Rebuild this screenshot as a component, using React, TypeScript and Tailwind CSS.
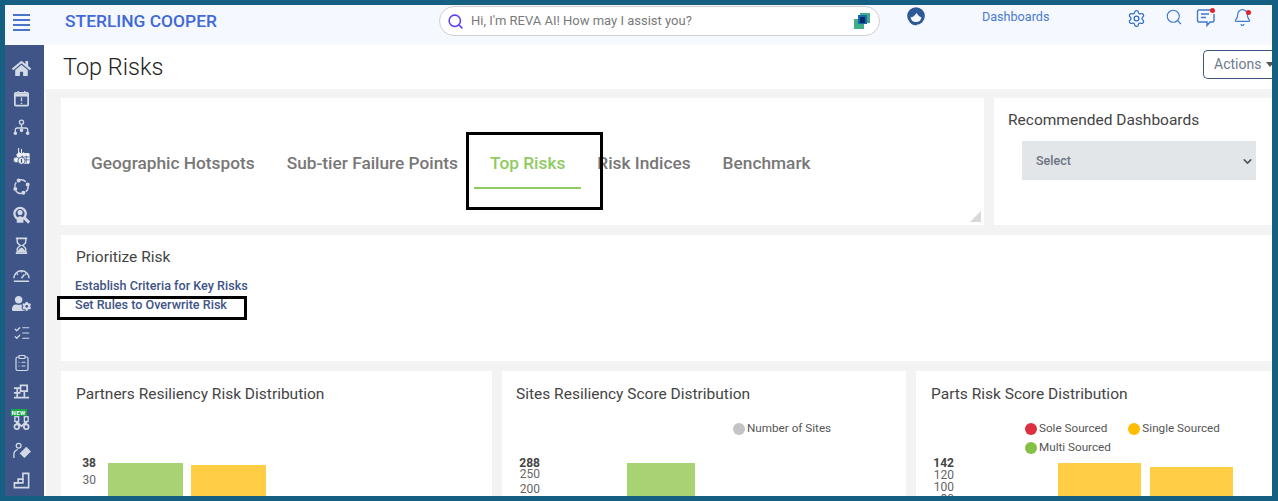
import React from 'react';
import { Settings, Search, Bell, ChevronDown, ListChecks, ClipboardList } from 'lucide-react';
import { FaHome, FaUserCog } from 'react-icons/fa';

const C = '#d3d9e5';

const Svg = ({ children }: { children: React.ReactNode }) => (
  <svg width="19" height="19" viewBox="0 0 20 20" fill="none" stroke={C} strokeWidth="1.4" aria-hidden>
    {children}
  </svg>
);

const SIDE_ICONS = [
  <FaHome key="home" size={19} color={C} />,
  <Svg key="cal">
    <rect x="3" y="4" width="14" height="13.5" rx="1" strokeWidth="1.8" />
    <path d="M3 6.500h14" strokeWidth="3" />
    <path d="M6.500 2v2M13.500 2v2M10 9v4M10 14.500v1.200" />
  </Svg>,
  <Svg key="org">
    <circle cx="10" cy="4.500" r="2.200" />
    <path d="M10 7v3M3.500 15v-2.500q0-2 2-2h9q2 0 2 2V15" />
    <circle cx="3.500" cy="16" r="1.200" fill={C} />
    <circle cx="10" cy="13" r="1.200" fill={C} />
    <circle cx="16.500" cy="16" r="1.200" fill={C} />
  </Svg>,
  <Svg key="factory">
    <path d="M7 1v6M10 2v5M5 8l3-2 2 2 2-2 1.500 1H18v10H9z" fill="#eef1f6" stroke="#fff" strokeWidth="1" />
    <path d="M11 9v8M15 9v8M9 10.500h9M9 13.500h9" stroke="#3f5487" strokeWidth="0.8" />
    <circle cx="4.500" cy="13.500" r="3" fill="#eef1f6" stroke="#3f5487" strokeWidth="0.8" />
    <circle cx="10" cy="14.500" r="3.700" fill="#eef1f6" stroke="#3f5487" strokeWidth="0.8" />
    <path d="M10 12.500v4" stroke="#3f5487" />
  </Svg>,
  <Svg key="cycle">
    <path d="M8 3.200a7 7 0 0 1 6.500 1.800M17 9.500a7 7 0 0 1-2.500 6M10.500 17.200a7 7 0 0 1-6.500-2.500M3 11a7 7 0 0 1 1.500-5.500" strokeWidth="1.500" />
    <circle cx="7" cy="3.700" r="1.400" fill={C} />
    <circle cx="16.500" cy="8" r="1.400" fill={C} />
    <circle cx="12" cy="16.500" r="1.400" fill={C} />
    <circle cx="3.500" cy="12.500" r="1.400" fill={C} />
  </Svg>,
  <Svg key="person">
    <circle cx="8.500" cy="8" r="6" strokeWidth="2.400" />
    <circle cx="8.500" cy="6.800" r="2" fill={C} />
    <path d="M5 12.500q3.500-3.500 7 0v5H5z" fill={C} stroke="none" />
    <path d="M13 12.500l5 5" strokeWidth="3" />
  </Svg>,
  <Svg key="hour">
    <path d="M4 2.500h12M4 18h12" strokeWidth="2" />
    <path d="M5.500 3v3q0 2 3.500 4-3.500 2-3.500 4v4M14.500 3v3q0 2-3.500 4 3.500 2 3.500 4v4" strokeWidth="1.500" />
    <path d="M6 17q0-3 4-5 4 2 4 5z" fill={C} stroke="none" />
  </Svg>,
  <Svg key="gauge">
    <path d="M2 14a8 8 0 0 1 16 0" strokeWidth="1.600" />
    <path d="M10 6v2M5 9l1.200 1.200M15 9l-1.200 1.200M10 14l3-4M2 17h16" strokeWidth="1.600" />
  </Svg>,
  <FaUserCog key="user" size={19} color={C} />,
  <ListChecks key="list" size={18} color={C} strokeWidth={1.6} />,
  <ClipboardList key="clip" size={18} color={C} strokeWidth={1.6} />,
  <Svg key="flow">
    <path d="M2 6.500h7M9 3.500h7v6h-7zM2 11.500h7M5.500 6.500v10M13 9.500v7M2 16.500h16" strokeWidth="1.800" />
  </Svg>,
  <div key="new" className="relative flex h-[20px] w-[20px] items-end justify-center">
    <Svg>
      <rect x="3" y="5" width="4" height="5" />
      <rect x="13" y="5" width="4" height="5" />
      <circle cx="5" cy="15.500" r="2.500" strokeWidth="1.800" />
      <circle cx="15" cy="15.500" r="2.500" strokeWidth="1.800" />
      <path d="M5 10l5 5 5-5M5 10v3M15 10v3" strokeWidth="1.800" />
    </Svg>
    <span className="absolute left-[-1px] top-[-2px] bg-[#19a94b] px-[1px] text-[6px] font-bold leading-[7px] tracking-[0.5px] text-white">NEW</span>
  </div>,
  <Svg key="pen">
    <circle cx="7" cy="5" r="2.500" />
    <path d="M2 18v-4q0-4 4-5" />
    <path d="M9 13l6-6 4 4-6 6z" fill={C} />
  </Svg>,
  <Svg key="steps">
    <path d="M2.500 17.500h15v-15h-6v6h-5v4h-4z" strokeWidth="1.700" />
    <path d="M2.500 12.500h9v-4" strokeWidth="1.700" />
  </Svg>,
];

const TABS = ['Geographic Hotspots', 'Sub-tier Failure Points', 'Top Risks', 'Risk Indices', 'Benchmark'];

const Legend = ({ color, label }: { color: string; label: string }) => (
  <span className="flex items-center gap-[2px]">
    <span className="h-[12px] w-[12px] rounded-full" style={{ backgroundColor: color }} />
    {label}
  </span>
);

const AxisLabel = ({ x, y, bold, children }: { x: number; y: number; bold?: boolean; children: React.ReactNode }) => (
  <text x={x} y={y} textAnchor="end" fontFamily="Roboto" fontSize="12" fontWeight={bold ? 700 : 400} fill={bold ? '#444' : '#666'}>
    {children}
  </text>
);

export default function App() {
  return (
    <div className="h-[501px] w-[1278px] overflow-hidden bg-[#155f82] pb-[5px] pl-[5px] pr-[6px] pt-[5px] font-['Roboto',sans-serif]">
      <div className="relative flex h-full flex-col overflow-hidden bg-white">
        {/* Top bar */}
        <header className="flex h-[40px] shrink-0 items-start bg-[#f5f8ff]">
          <div className="ml-[8px] mt-[9px] flex w-[17px] flex-col gap-[3px]">
            <span className="h-[2px] bg-[#4a74c9]" />
            <span className="h-[2px] bg-[#4a74c9]" />
            <span className="h-[2px] bg-[#4a74c9]" />
            <span className="h-[2px] bg-[#4a74c9]" />
          </div>
          <div className="ml-[35px] mt-[6px] w-[152px] whitespace-nowrap text-[17.400px] font-medium leading-[21px] text-[#4169d8]">STERLING COOPER</div>
          <div className="ml-[222px] mt-[1px] flex h-[30px] w-[441px] items-center rounded-full border border-[#cfcfd4] bg-white pl-[7px] pr-[9px]">
            <Search size={17} color="#5a3ff0" strokeWidth={2.2} />
            <span className="ml-[7px] flex-1 text-[13px] text-[#7a7a7a]">Hi, I'm REVA AI! How may I assist you?</span>
            <svg width="16" height="16" viewBox="0 0 16 16" aria-hidden>
              <rect x="6" y="0" width="10" height="10" fill="#3fae86" />
              <rect x="0" y="6" width="10" height="10" fill="#3fae86" />
              <rect x="4" y="2" width="9" height="9" fill="#1667b7" />
              <rect x="6" y="4" width="5" height="6" fill="#0d2a63" />
            </svg>
          </div>
          <svg className="ml-[27px] mt-[2px]" width="18" height="20" viewBox="0 0 18 20" aria-hidden>
            <circle cx="9" cy="9" r="8.800" fill="#2d5a94" />
            <path d="M3.500 10.500q3.500-.5 6-4.500 2 3.500 5 4.500-1 4.500-5.500 4.500-4.500 0-5.500-4.500z" fill="#f5f8ff" />
            <path d="M3 13q1.500 5 7 4.500" stroke="#2d5a94" strokeWidth="1.600" fill="none" />
          </svg>
          <div className="ml-[57px] mt-[4px] w-[68px] whitespace-nowrap text-[12.600px] leading-[16px] text-[#4a7ad0]">Dashboards</div>
          <Settings className="ml-[77px] mt-[4px]" size={19} color="#2f6cc4" strokeWidth={1.6} />
          <Search className="ml-[19px] mt-[3px]" size={18} color="#3f7ad0" strokeWidth={1.5} />
          <div className="relative ml-[13px] mt-[2px]">
            <svg width="20" height="20" viewBox="0 0 20 20" fill="none" stroke="#3f7ad0" strokeWidth="1.400" aria-hidden>
              <path d="M15 3H3q-1.500 0-1.500 1.500v9Q1.500 15 3 15h8v3.500l3-3.500h2.500q1.500 0 1.500-1.500V7" />
              <path d="M5 7h8M5 10.500h5" />
            </svg>
            <span className="absolute right-[1px] top-[1px] h-[5px] w-[5px] rounded-full bg-[#e3222c]" />
          </div>
          <div className="relative ml-[17px] mt-[3px]">
            <Bell size={19} color="#3f7ad0" strokeWidth={1.5} />
            <span className="absolute right-[1px] top-[2px] h-[5px] w-[5px] rounded-full bg-[#e3222c]" />
          </div>
        </header>

        <div className="flex min-h-0 flex-1">
          {/* Side rail */}
          <aside className="flex w-[39px] shrink-0 flex-col items-center bg-[#3f5487] pr-[6px] pt-[9px]">
            {SIDE_ICONS.map((icon, i) => (
              <div key={i} className="flex h-[29.4px] w-full shrink-0 items-center justify-center">
                {icon}
              </div>
            ))}
          </aside>

          <main className="min-w-0 flex-1 overflow-hidden bg-white pl-[2px]">
            <div className="flex h-[44px] items-start bg-white">
              <h1 className="ml-[17px] mt-[8px] text-[23.500px] font-light leading-[28px] text-[#222]">Top Risks</h1>
              <button type="button" className="ml-auto mt-[5px] flex h-[29px] w-[69px] shrink-0 items-center gap-[5px] rounded-l-[5px] border border-r-0 border-[#3f5487] pl-[10px] text-[14px] text-[#6d7a8c]">
                Actions
                <span className="h-0 w-0 border-x-[4px] border-t-[5px] border-x-transparent border-t-[#555]" />
              </button>
            </div>

            <div className="flex h-[407px] flex-col gap-[10px] bg-[#f3f3f3] pl-[15px] pt-[9px]">
              <div className="flex h-[127px] shrink-0 gap-[10px]">
                <div className="relative flex w-[923px] items-start bg-white pl-[14px] pt-[52px]">
                  {TABS.map((tab) => (
                    <div
                      key={tab}
                      className={`h-[39px] whitespace-nowrap border-b-2 px-4 text-[17.300px] font-medium leading-[26px] ${
                        tab === 'Top Risks' ? 'border-[#8fcb62] text-[#8fcb62]' : 'border-transparent text-[#777]'
                      }`}
                    >
                      {tab}
                    </div>
                  ))}
                  <span className="absolute bottom-[3px] right-[3px] h-0 w-0 border-b-[11px] border-l-[11px] border-b-[#d8d8d8] border-l-transparent" />
                </div>
                <div className="flex-1 bg-white pl-[14px] pt-[12px]">
                  <h3 className="text-[15.500px] leading-[20px] text-[#444]">Recommended Dashboards</h3>
                  <div className="ml-[14px] mt-[11px] flex h-[39px] w-[234px] items-center justify-between bg-[#e3e6e8] pl-[14px] pr-[2px] pt-[1px] text-[12.500px] font-medium text-[#6b7280]">
                    Select
                    <ChevronDown size={13} color="#555" strokeWidth={3} />
                  </div>
                </div>
              </div>

              <div className="h-[126px] shrink-0 bg-white pl-[15px] pt-[12px]">
                <h3 className="text-[15.500px] leading-[20px] text-[#444]">Prioritize Risk</h3>
                <div className="-ml-px mt-[11px] flex flex-col gap-[3px] text-[12.600px] font-medium leading-[16px] text-[#3f5487]">
                  <span>Establish Criteria for Key Risks</span>
                  <span>Set Rules to Overwrite Risk</span>
                </div>
              </div>

              <div className="flex min-h-0 flex-1 gap-[10px]">
                <div className="w-[431px] overflow-hidden bg-white pt-[13px]">
                  <h3 className="pl-[15px] text-[15.500px] leading-[20px] text-[#444]">Partners Resiliency Risk Distribution</h3>
                  <div className="mt-[15px] h-[38px]" />
                  <svg className="block" width="431" height="39" aria-hidden>
                    <AxisLabel x={35} y={10} bold>38</AxisLabel>
                    <AxisLabel x={35} y={27}>30</AxisLabel>
                    <rect x="47" y="6" width="75" height="40" fill="#a7d373" />
                    <rect x="130" y="8" width="75" height="40" fill="#ffce44" />
                  </svg>
                </div>
                <div className="w-[404px] overflow-hidden bg-white pt-[13px]">
                  <h3 className="pl-[14px] text-[15.500px] leading-[20px] text-[#444]">Sites Resiliency Score Distribution</h3>
                  <div className="mt-[15px] flex h-[38px] items-start pl-[231px] text-[11.700px] leading-[19px] text-[#555]">
                    <Legend color="#c4c4c4" label="Number of Sites" />
                  </div>
                  <svg className="block" width="404" height="39" aria-hidden>
                    <AxisLabel x={38} y={10} bold>288</AxisLabel>
                    <AxisLabel x={38} y={21}>250</AxisLabel>
                    <AxisLabel x={38} y={36}>200</AxisLabel>
                    <rect x="125" y="6" width="68" height="40" fill="#a7d373" />
                  </svg>
                </div>
                <div className="flex-1 overflow-hidden bg-white pt-[13px]">
                  <h3 className="pl-[15px] text-[15.500px] leading-[20px] text-[#444]">Parts Risk Score Distribution</h3>
                  <div className="mt-[15px] h-[38px] pl-[109px] text-[11.700px] leading-[19px] text-[#555]">
                    <div className="flex gap-[21px]">
                      <Legend color="#dc3040" label="Sole Sourced" />
                      <Legend color="#ffbc00" label="Single Sourced" />
                    </div>
                    <Legend color="#84c044" label="Multi Sourced" />
                  </div>
                  <svg className="block" width="356" height="39" aria-hidden>
                    <AxisLabel x={38} y={10} bold>142</AxisLabel>
                    <AxisLabel x={38} y={22}>120</AxisLabel>
                    <AxisLabel x={38} y={34}>100</AxisLabel>
                    <AxisLabel x={38} y={46}>80</AxisLabel>
                    <rect x="142" y="6" width="83" height="40" fill="#ffce44" />
                    <rect x="234" y="10" width="83" height="40" fill="#ffce44" />
                  </svg>
                </div>
              </div>
            </div>
          </main>
        </div>

        {/* Review marks drawn over the page */}
        <span className="pointer-events-none absolute left-[461px] top-[127px] h-[78px] w-[137px] border-[3px] border-black" />
        <span className="pointer-events-none absolute left-[52px] top-[291px] h-[24px] w-[190px] border-[3px] border-black" />
      </div>
    </div>
  );
}
